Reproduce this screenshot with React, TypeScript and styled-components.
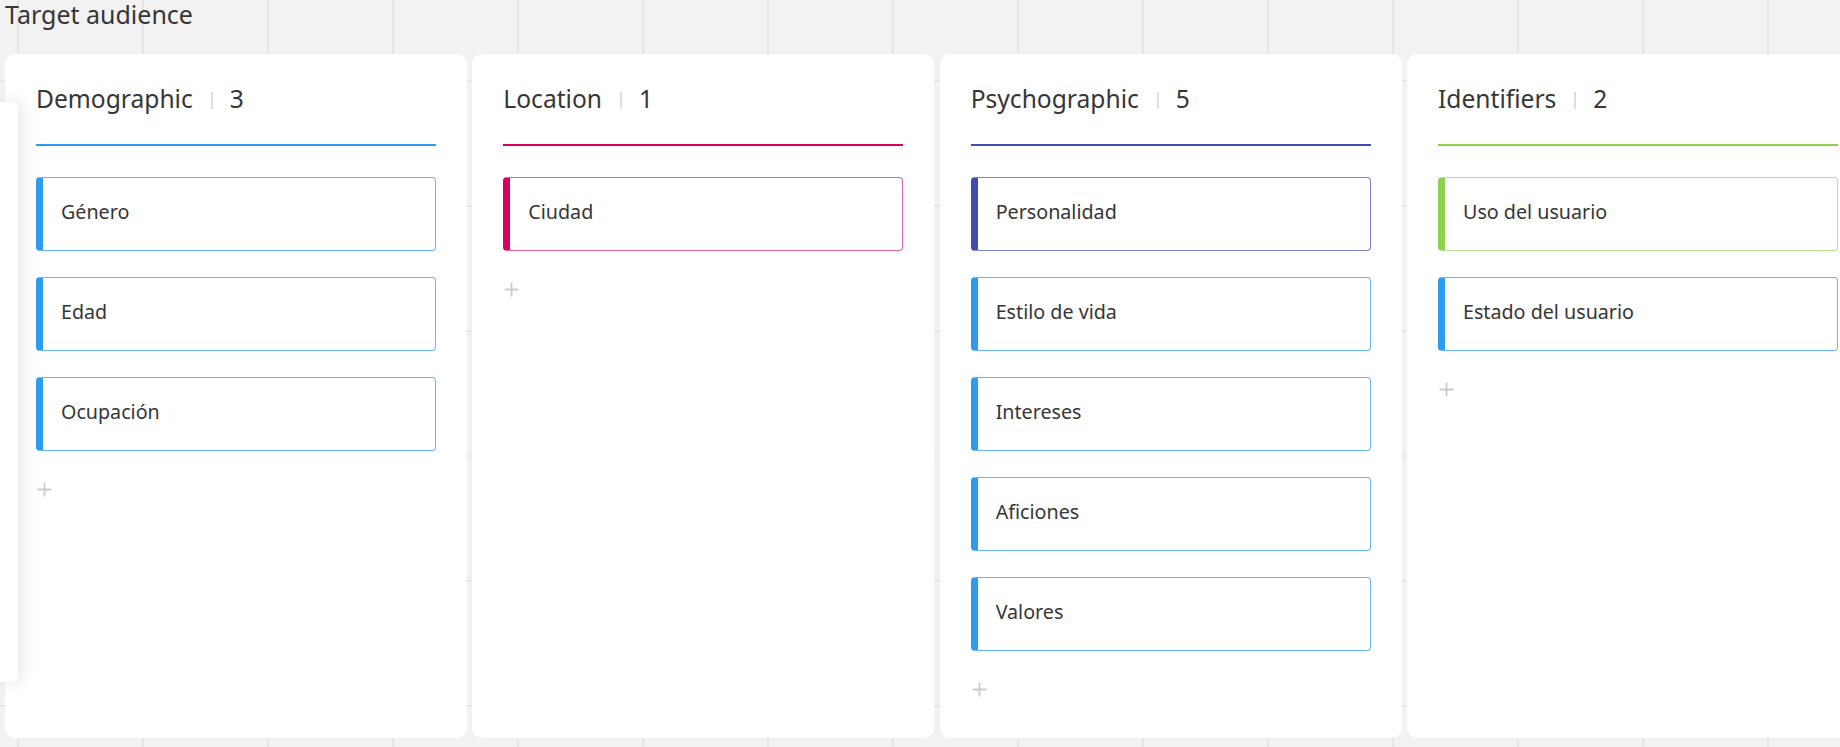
import React from "react";
import styled, { createGlobalStyle } from "styled-components";

const GlobalStyle = createGlobalStyle`
  html, body {
    margin: 0;
    padding: 0;
    width: 100%;
    height: 100%;
    overflow: hidden;
  }
  body {
    font-family: "Noto Sans", "Open Sans", Arial, sans-serif;
    color: #333333;
    background-color: #f2f2f2;
    background-image:
      linear-gradient(to right, #e6e6e6 2px, transparent 2px),
      linear-gradient(to bottom, #e6e6e6 2px, transparent 2px);
    background-size: 125px 125px;
    background-position: 17px 80px;
  }
`;

const Page = styled.div`
  display: flex;
  flex-direction: column;
  padding-left: 5px;
  width: 1900px;
`;

const Title = styled.div`
  font-size: 25px;
  line-height: 30px;
  height: 30px;
  margin-top: -1px;
  margin-bottom: 25px;
  color: #363636;
  white-space: nowrap;
`;

const Board = styled.div`
  display: flex;
  gap: 5.33px;
  align-items: flex-start;
`;

const Column = styled.section`
  flex: 0 0 462px;
  width: 462px;
  height: 684px;
  box-sizing: border-box;
  background: #ffffff;
  border-radius: 10px;
  padding: 0 31px;
  display: flex;
  flex-direction: column;
`;

const Header = styled.div<{ $color: string }>`
  display: flex;
  align-items: center;
  padding: 28px 0 28px;
  border-bottom: 2px solid ${(p) => p.$color};
  font-size: 24.6px;
  line-height: 34px;
  color: #363636;
  white-space: nowrap;
`;

const Divider = styled.span`
  display: inline-block;
  width: 2px;
  height: 17px;
  margin: 2px 17px 0 18px;
  background: #dedede;
`;

const Count = styled.span`
  color: #363636;
`;

const List = styled.div`
  display: flex;
  flex-direction: column;
  gap: 26px;
  margin-top: 31px;
`;

const Item = styled.div<{ $color: string; $border: string }>`
  box-sizing: border-box;
  height: 74px;
  display: flex;
  align-items: center;
  padding-left: 18px;
  padding-bottom: 6px;
  border: 1px solid ${(p) => p.$border};
  border-left: 7px solid ${(p) => p.$color};
  border-radius: 4px;
  font-size: 19.7px;
  color: #363636;
  white-space: nowrap;
`;

const AddButton = styled.div`
  margin-top: 31px;
  width: 16px;
  height: 16px;
  display: flex;
  padding-left: 1px;
`;

const SidePanel = styled.div`
  position: fixed;
  left: 0;
  top: 102px;
  width: 18px;
  height: 580px;
  background: #ffffff;
  border-radius: 0 6px 6px 0;
  box-shadow: 2px 0 18px rgba(0, 0, 0, 0.12);
`;

const COLORS = {
  blue: { main: "#2d9bf0", light: "#68b6f4" },
  magenta: { main: "#da0063", light: "#e6609b" },
  indigo: { main: "#414bb2", light: "#7c82cc" },
  green: { main: "#8fd14f", light: "#b6e28f" },
};

type ColorKey = keyof typeof COLORS;

type ColumnData = {
  title: string;
  color: ColorKey;
  items: { label: string; color: ColorKey }[];
};

const columns: ColumnData[] = [
  {
    title: "Demographic",
    color: "blue",
    items: [
      { label: "Género", color: "blue" },
      { label: "Edad", color: "blue" },
      { label: "Ocupación", color: "blue" },
    ],
  },
  {
    title: "Location",
    color: "magenta",
    items: [{ label: "Ciudad", color: "magenta" }],
  },
  {
    title: "Psychographic",
    color: "indigo",
    items: [
      { label: "Personalidad", color: "indigo" },
      { label: "Estilo de vida", color: "blue" },
      { label: "Intereses", color: "blue" },
      { label: "Aficiones", color: "blue" },
      { label: "Valores", color: "blue" },
    ],
  },
  {
    title: "Identifiers",
    color: "green",
    items: [
      { label: "Uso del usuario", color: "green" },
      { label: "Estado del usuario", color: "blue" },
    ],
  },
];

const PlusIcon = () => (
  <svg width="15" height="15" viewBox="0 0 15 15">
    <path d="M7.5 0.5v14M0.5 7.5h14" stroke="#cccccc" strokeWidth="1.8" fill="none" />
  </svg>
);

export default function App() {
  return (
    <>
      <GlobalStyle />
      <Page>
        <Title>Target audience</Title>
        <Board>
          {columns.map((col) => (
            <Column key={col.title}>
              <Header $color={COLORS[col.color].main}>
                <span>{col.title}</span>
                <Divider />
                <Count>{col.items.length}</Count>
              </Header>
              <List>
                {col.items.map((it) => (
                  <Item
                    key={it.label}
                    $color={COLORS[it.color].main}
                    $border={COLORS[it.color].light}
                  >
                    {it.label}
                  </Item>
                ))}
              </List>
              <AddButton>
                <PlusIcon />
              </AddButton>
            </Column>
          ))}
        </Board>
      </Page>
      <SidePanel />
    </>
  );
}
